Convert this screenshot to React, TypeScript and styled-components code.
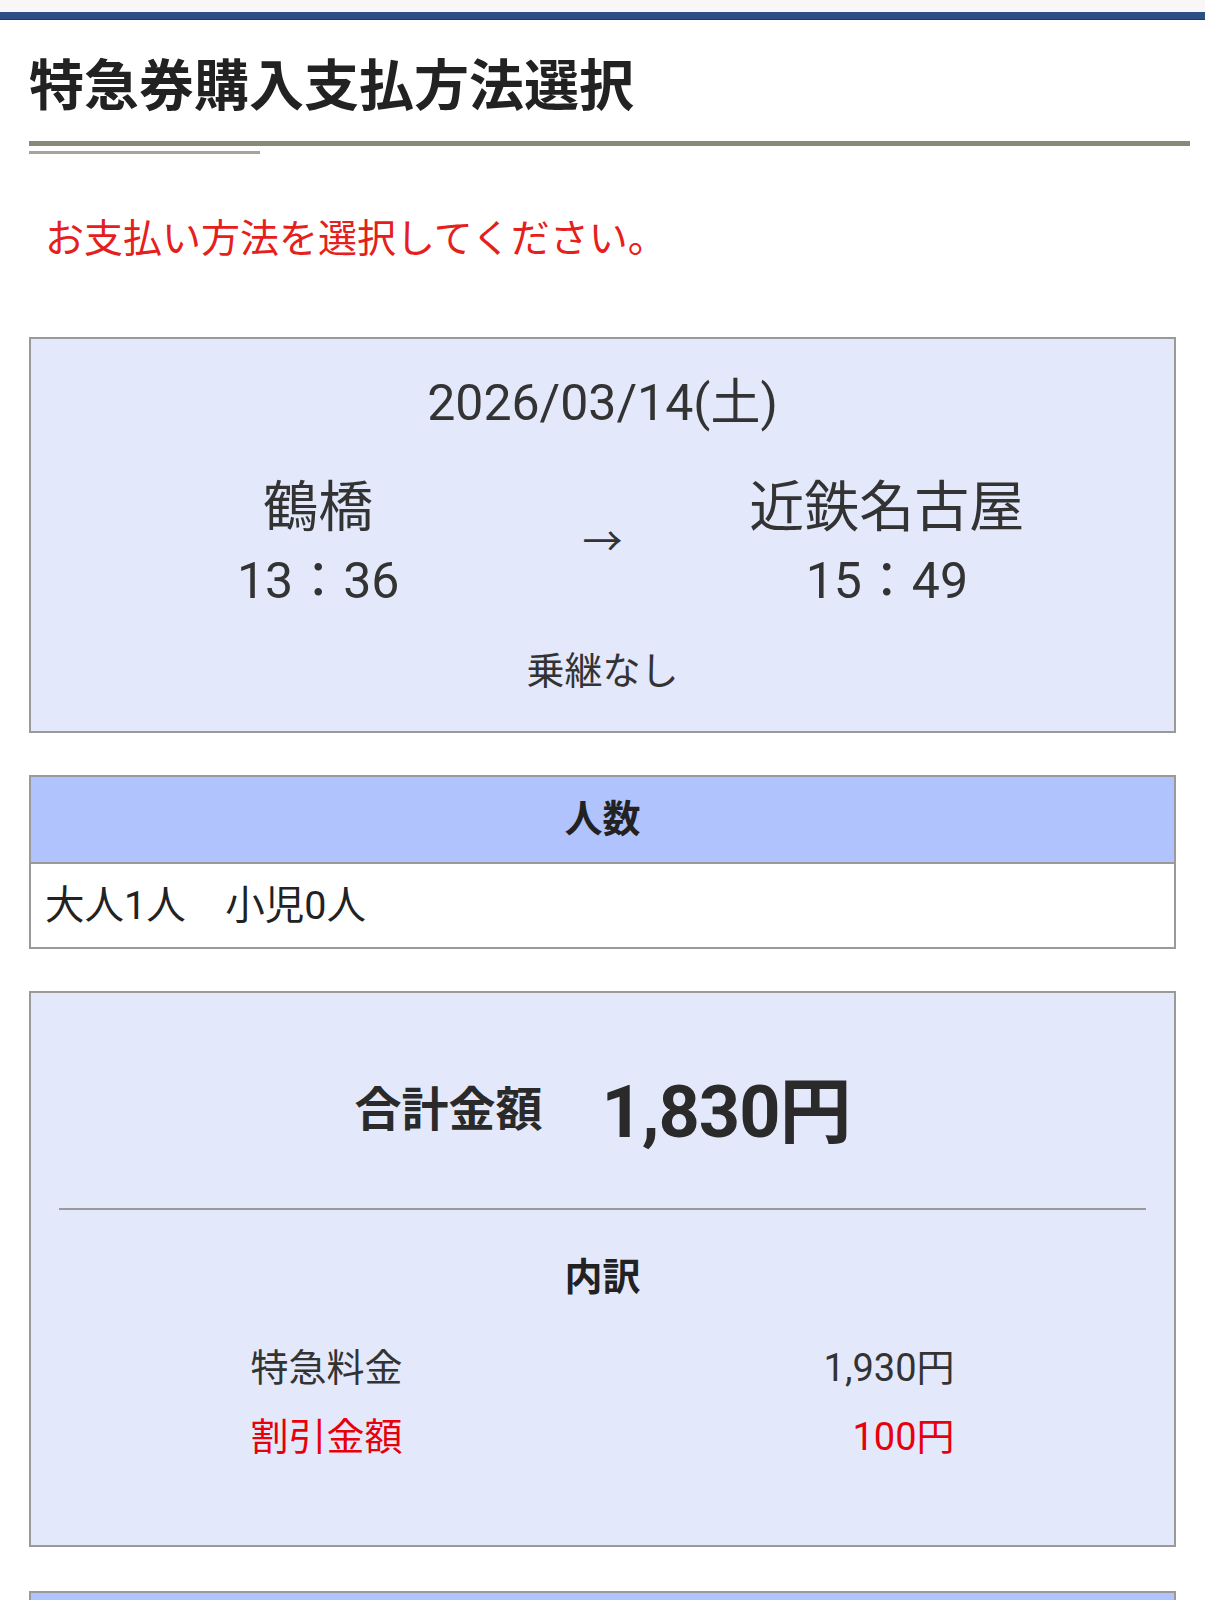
import styled, { createGlobalStyle } from "styled-components";

const GlobalStyle = createGlobalStyle`
  html, body {
    margin: 0;
    padding: 0;
    background: #ffffff;
  }
  body {
    font-family: "Roboto", "Noto Sans CJK JP", sans-serif;
    color: #333333;
  }
`;

const TopStrip = styled.div`
  height: 12px;
  background: #f8f6f6;
`;

const BrandBar = styled.div`
  height: 7px;
  background: #2c4f86;
  border-bottom: 1px solid #1f3a66;
`;

const Page = styled.main`
  padding: 0 29px 40px;
`;

const Heading = styled.div`
  margin-right: -14px;
  padding-top: 34px;
`;

const HeadingText = styled.h1`
  margin: 0;
  font-size: 55px;
  line-height: 64px;
  font-weight: 700;
  color: #222222;
`;

const HeadingRule = styled.div`
  margin-top: 23px;
  height: 5px;
  background: #8a8877;
`;

const HeadingSubRule = styled.div`
  margin-top: 5px;
  width: 231px;
  height: 3px;
  background: #a6a49a;
`;

const Notice = styled.p`
  margin: 58px 0 0 16px;
  font-size: 39px;
  line-height: 54px;
  color: #e5201c;
`;

const Panel = styled.section<{ $top: number }>`
  margin-top: ${(p) => p.$top}px;
  border: 2px solid #9a9a9a;
  background: #e3e8fb;
`;

const TripPanel = styled(Panel)`
  padding: 31px 0 33px;
  text-align: center;
`;

const DateLine = styled.div`
  font-size: 50px;
  line-height: 66px;
`;

const Route = styled.div`
  display: grid;
  grid-template-columns: 1fr 1fr 1fr;
  align-items: center;
  padding: 0 145px;
  margin-top: 34px;
`;

const Stop = styled.div`
  display: flex;
  flex-direction: column;
  align-items: center;
`;

const StationName = styled.div`
  font-size: 55px;
  line-height: 74px;
  white-space: nowrap;
`;

const StationTime = styled.div`
  font-size: 50px;
  line-height: 74px;
  white-space: nowrap;
`;

const Arrow = styled.div`
  font-size: 40px;
  line-height: 40px;
  margin-top: -2px;
`;

const Transfer = styled.div`
  margin-top: 26px;
  font-size: 38px;
  line-height: 54px;
`;

const Table = styled.section<{ $top: number }>`
  margin-top: ${(p) => p.$top}px;
  border: 2px solid #9a9a9a;
  background: #ffffff;
`;

const TableHead = styled.div`
  box-sizing: border-box;
  height: 85px;
  padding-bottom: 8px;
  display: flex;
  align-items: center;
  justify-content: center;
  background: #b0c3fc;
  font-size: 38px;
  font-weight: 700;
  color: #222222;
`;

const TableBody = styled.div`
  box-sizing: border-box;
  height: 85px;
  padding: 0 0 8px 14px;
  display: flex;
  align-items: center;
  border-top: 2px solid #9a9a9a;
  font-size: 39.5px;
  color: #222222;
  white-space: pre;
`;

const FarePanel = styled(Panel)`
  padding: 62px 0 73px;
`;

const TotalRow = styled.div`
  display: flex;
  justify-content: center;
  align-items: center;
  gap: 59px;
  height: 100px;
`;

const TotalLabel = styled.span`
  font-size: 47px;
  font-weight: 700;
  color: #2a2a2a;
`;

const TotalAmount = styled.span`
  font-size: 72px;
  font-weight: 700;
  color: #2a2a2a;
  letter-spacing: -1px;
`;

const Divider = styled.hr`
  margin: 53px 28px 0;
  border: none;
  height: 2px;
  background: #9a9a9a;
`;

const BreakdownTitle = styled.div`
  margin-top: 40px;
  text-align: center;
  font-size: 38px;
  line-height: 54px;
  font-weight: 700;
  color: #222222;
`;

const Breakdown = styled.div`
  width: 704px;
  margin: 30px auto 0;
`;

const FareLine = styled.div<{ $discount?: boolean }>`
  display: flex;
  justify-content: space-between;
  font-size: 38px;
  line-height: 69px;
  color: ${(p) => (p.$discount ? "#e8000b" : "#333333")};
`;

const NextHead = styled.div`
  height: 85px;
  background: #b0c3fc;
`;

export default function App() {
  return (
    <>
      <GlobalStyle />
      <TopStrip />
      <BrandBar />
      <Page>
        <Heading>
          <HeadingText>特急券購入支払方法選択</HeadingText>
          <HeadingRule />
          <HeadingSubRule />
        </Heading>

        <Notice>お支払い方法を選択してください。</Notice>

        <TripPanel $top={71}>
          <DateLine>2026/03/14(土)</DateLine>
          <Route>
            <Stop>
              <StationName>鶴橋</StationName>
              <StationTime>13：36</StationTime>
            </Stop>
            <Arrow>→</Arrow>
            <Stop>
              <StationName>近鉄名古屋</StationName>
              <StationTime>15：49</StationTime>
            </Stop>
          </Route>
          <Transfer>乗継なし</Transfer>
        </TripPanel>

        <Table $top={42}>
          <TableHead>人数</TableHead>
          <TableBody>{"大人1人　小児0人"}</TableBody>
        </Table>

        <FarePanel $top={42}>
          <TotalRow>
            <TotalLabel>合計金額</TotalLabel>
            <TotalAmount>1,830円</TotalAmount>
          </TotalRow>
          <Divider />
          <BreakdownTitle>内訳</BreakdownTitle>
          <Breakdown>
            <FareLine>
              <span>特急料金</span>
              <span>1,930円</span>
            </FareLine>
            <FareLine $discount>
              <span>割引金額</span>
              <span>100円</span>
            </FareLine>
          </Breakdown>
        </FarePanel>

        <Table $top={44}>
          <NextHead />
        </Table>
      </Page>
    </>
  );
}
